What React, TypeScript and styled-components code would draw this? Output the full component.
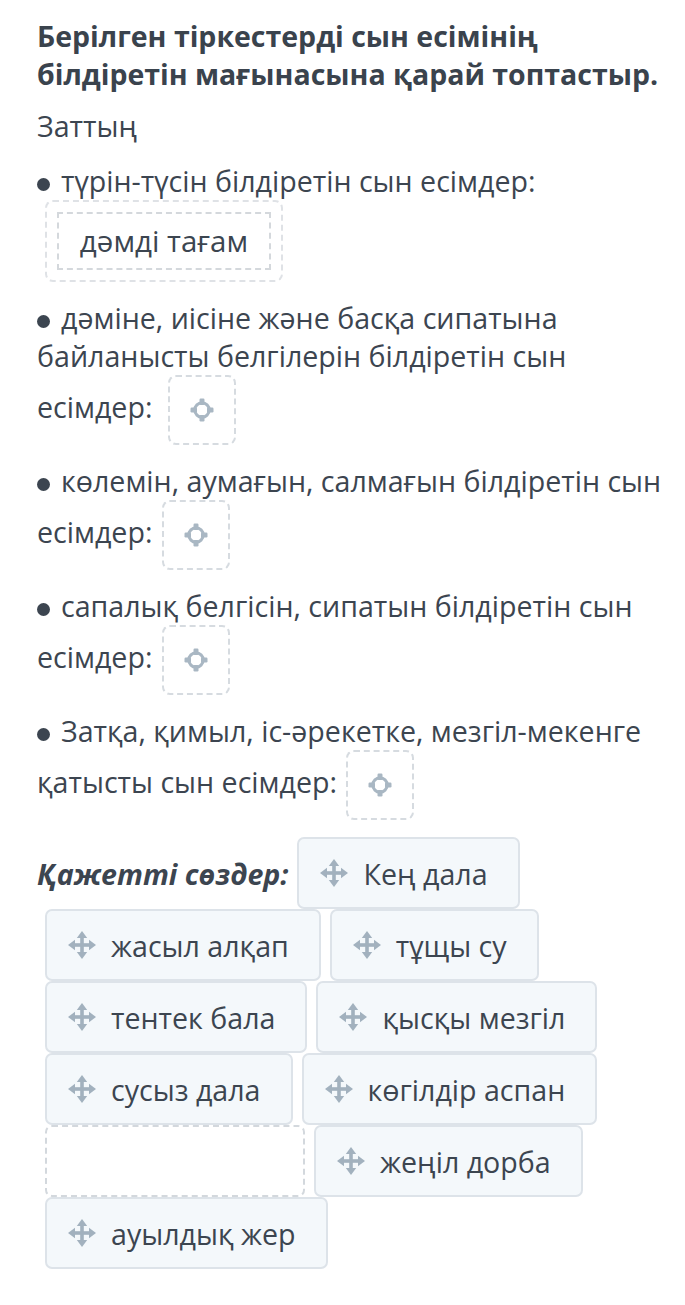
import styled, { createGlobalStyle } from "styled-components";

const GlobalStyle = createGlobalStyle`
  body {
    margin: 0;
    background: #ffffff;
    font-family: "Open Sans", "Noto Sans", sans-serif;
    color: #3c4550;
  }
`;

const Page = styled.div`
  padding: 17px 10px 30px 37px;
`;

const Title = styled.h1`
  margin: 0 0 14px;
  font-size: 28.5px;
  line-height: 38px;
  font-weight: 700;
  color: #3a434d;
`;

const Para = styled.p`
  margin: 0 0 17px;
  font-size: 28.6px;
  line-height: 38px;
  font-weight: 400;
`;

const Bullet = styled.span`
  display: inline-block;
  width: 13px;
  height: 13px;
  border-radius: 50%;
  background: #3c4550;
  vertical-align: 1px;
  margin-right: 11px;
`;

const EmptyZone = styled.span<{ $gap: number }>`
  display: inline-flex;
  align-items: center;
  justify-content: center;
  vertical-align: middle;
  width: 68px;
  height: 70px;
  margin-left: ${(p) => p.$gap}px;
  box-sizing: border-box;
  border: 2px dashed #d6dbe0;
  border-radius: 8px;
`;

const FilledZone = styled.span`
  display: inline-block;
  vertical-align: top;
  margin-left: 8px;
  width: 238px;
  height: 82px;
  padding: 10px;
  box-sizing: border-box;
  border: 2px dashed #dfe2e6;
  border-radius: 8px;
`;

const PlacedWord = styled.span`
  display: flex;
  align-items: center;
  justify-content: center;
  height: 100%;
  box-sizing: border-box;
  border: 2px dashed #d4d8dc;
  font-size: 29.5px;
  line-height: 1;
`;

const WordBank = styled.div`
  display: flex;
  flex-wrap: wrap;
  column-gap: 9px;
  row-gap: 0;
  padding-left: 8px;
`;

const BankLabel = styled.span`
  display: flex;
  align-items: center;
  margin-left: -8px;
  font-size: 28.6px;
  font-weight: 700;
  font-style: italic;
`;

const Chip = styled.div<{ $empty?: boolean }>`
  display: flex;
  align-items: center;
  gap: 14px;
  height: 72px;
  padding: 0 30px 0 20px;
  box-sizing: border-box;
  border-radius: 7px;
  font-size: 28.6px;
  white-space: nowrap;
  border: 2px ${(p) => (p.$empty ? "dashed #d3d8dd" : "solid #dde3e9")};
  background: ${(p) => (p.$empty ? "#ffffff" : "#f4f8fb")};
`;

const MoveIcon = () => (
  <svg width="30" height="30" viewBox="0 0 30 30" fill="#a2b1be">
    <rect x="13.2" y="6" width="3.6" height="18" />
    <rect x="6" y="13.2" width="18" height="3.6" />
    <polygon points="15,1 9.8,8 20.2,8" />
    <polygon points="15,29 9.8,22 20.2,22" />
    <polygon points="1,15 8,9.8 8,20.2" />
    <polygon points="29,15 22,9.8 22,20.2" />
  </svg>
);

const TargetIcon = () => (
  <svg width="28" height="28" viewBox="0 0 28 28" fill="#a9b7c3">
    <circle cx="14" cy="14" r="7.2" fill="none" stroke="#a9b7c3" strokeWidth="3" />
    <rect x="11.5" y="2.5" width="5" height="6.5" rx="1.2" />
    <rect x="11.5" y="19" width="5" height="6.5" rx="1.2" />
    <rect x="2.5" y="11.5" width="6.5" height="5" rx="1.2" />
    <rect x="19" y="11.5" width="6.5" height="5" rx="1.2" />
  </svg>
);

const Slot = ({ gap = 2 }: { gap?: number }) => (
  <EmptyZone $gap={gap}>
    <TargetIcon />
  </EmptyZone>
);

const words: { text?: string; width?: number }[] = [
  { text: "жасыл алқап" },
  { text: "тұщы су" },
  { text: "тентек бала" },
  { text: "қысқы мезгіл" },
  { text: "сусыз дала" },
  { text: "көгілдір аспан" },
  { width: 260 },
  { text: "жеңіл дорба" },
  { text: "ауылдық жер" },
];

export default function App() {
  return (
    <Page>
      <GlobalStyle />
      <Title>Берілген тіркестерді сын есімінің білдіретін мағынасына қарай топтастыр.</Title>
      <Para>Заттың</Para>
      <Para>
        <Bullet />
        түрін-түсін білдіретін сын есімдер:{" "}
        <FilledZone>
          <PlacedWord>дәмді тағам</PlacedWord>
        </FilledZone>
      </Para>
      <Para>
        <Bullet />
        дәміне, иісіне және басқа сипатына байланысты белгілерін білдіретін сын есімдер:{" "}
        <Slot gap={8} />
      </Para>
      <Para>
        <Bullet />
        көлемін, аумағын, салмағын білдіретін сын есімдер: <Slot />
      </Para>
      <Para>
        <Bullet />
        сапалық белгісін, сипатын білдіретін сын есімдер: <Slot />
      </Para>
      <Para>
        <Bullet />
        Затқа, қимыл, іс-әрекетке, мезгіл-мекенге қатысты сын есімдер: <Slot />
      </Para>
      <WordBank>
        <BankLabel>Қажетті сөздер:</BankLabel>
        <Chip>
          <MoveIcon />
          Кең дала
        </Chip>
        {words.map((w, i) =>
          w.text ? (
            <Chip key={i}>
              <MoveIcon />
              {w.text}
            </Chip>
          ) : (
            <Chip key={i} $empty style={{ width: w.width }} />
          )
        )}
      </WordBank>
    </Page>
  );
}
